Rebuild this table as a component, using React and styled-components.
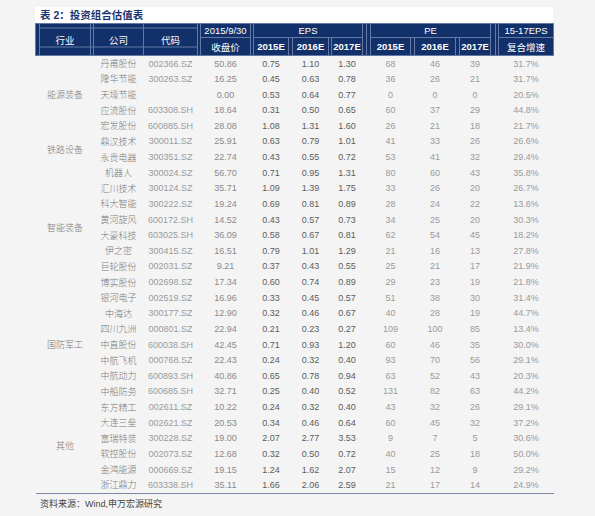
import React from "react"
import styled, { createGlobalStyle } from "styled-components"

const GlobalStyle = createGlobalStyle`
  html, body {
    margin: 0;
    padding: 0;
    background: #f4f4f4;
    font-family: "Liberation Sans", "Noto Sans CJK SC", sans-serif;
  }
`

const NAVY = "#12306a"
const LINE = "#6479a3"

// widths of every column, spacer columns included (sum = 518)
const COLS = [4, 51, 3, 50, 54, 3, 50, 3, 35, 4, 36, 3, 31, 4, 4, 40, 4, 41, 4, 31, 5, 3, 55]

const groups = [
    {name: "能源装备", rows: [
        ["丹甫股份", "002366.SZ", "50.86", "0.75", "1.10", "1.30", "68", "46", "39", "31.7%"],
        ["隆华节能", "300263.SZ", "16.25", "0.45", "0.63", "0.78", "36", "26", "21", "31.7%"],
        ["天壕节能", "", "0.00", "0.53", "0.64", "0.77", "0", "0", "0", "20.5%"],
        ["应流股份", "603308.SH", "18.64", "0.31", "0.50", "0.65", "60", "37", "29", "44.8%"],
        ["宏发股份", "600885.SH", "28.08", "1.08", "1.31", "1.60", "26", "21", "18", "21.7%"],
    ]},
    {name: "铁路设备", rows: [
        ["鼎汉技术", "300011.SZ", "25.91", "0.63", "0.79", "1.01", "41", "33", "26", "26.6%"],
        ["永贵电器", "300351.SZ", "22.74", "0.43", "0.55", "0.72", "53", "41", "32", "29.4%"],
    ]},
    {name: "智能装备", rows: [
        ["机器人", "300024.SZ", "56.70", "0.71", "0.95", "1.31", "80", "60", "43", "35.8%"],
        ["汇川技术", "300124.SZ", "35.71", "1.09", "1.39", "1.75", "33", "26", "20", "26.7%"],
        ["科大智能", "300222.SZ", "19.24", "0.69", "0.81", "0.89", "28", "24", "22", "13.6%"],
        ["黄河旋风", "600172.SH", "14.52", "0.43", "0.57", "0.73", "34", "25", "20", "30.3%"],
        ["大豪科技", "603025.SH", "36.09", "0.58", "0.67", "0.81", "62", "54", "45", "18.2%"],
        ["伊之密", "300415.SZ", "16.51", "0.79", "1.01", "1.29", "21", "16", "13", "27.8%"],
        ["巨轮股份", "002031.SZ", "9.21", "0.37", "0.43", "0.55", "25", "21", "17", "21.9%"],
        ["博实股份", "002698.SZ", "17.34", "0.60", "0.74", "0.89", "29", "23", "19", "21.8%"],
    ]},
    {name: "国防军工", rows: [
        ["银河电子", "002519.SZ", "16.96", "0.33", "0.45", "0.57", "51", "38", "30", "31.4%"],
        ["中海达", "300177.SZ", "12.90", "0.32", "0.46", "0.67", "40", "28", "19", "44.7%"],
        ["四川九洲", "000801.SZ", "22.94", "0.21", "0.23", "0.27", "109", "100", "85", "13.4%"],
        ["中直股份", "600038.SH", "42.45", "0.71", "0.93", "1.20", "60", "46", "35", "30.0%"],
        ["中航飞机", "000768.SZ", "22.43", "0.24", "0.32", "0.40", "93", "70", "56", "29.1%"],
        ["中航动力", "600893.SH", "40.86", "0.65", "0.78", "0.94", "63", "52", "43", "20.3%"],
        ["中船防务", "600685.SH", "32.71", "0.25", "0.40", "0.52", "131", "82", "63", "44.2%"],
    ]},
    {name: "其他", rows: [
        ["东方精工", "002611.SZ", "10.22", "0.24", "0.32", "0.40", "43", "32", "26", "29.1%"],
        ["大连三垒", "002621.SZ", "20.53", "0.34", "0.46", "0.64", "60", "45", "32", "37.2%"],
        ["富瑞特装", "300228.SZ", "19.00", "2.07", "2.77", "3.53", "9", "7", "5", "30.6%"],
        ["软控股份", "002073.SZ", "12.68", "0.32", "0.50", "0.72", "40", "25", "18", "50.0%"],
        ["金鸿能源", "000669.SZ", "19.15", "1.24", "1.62", "2.07", "15", "12", "9", "29.2%"],
        ["浙江鼎力", "603338.SH", "35.11", "1.66", "2.06", "2.59", "21", "17", "14", "24.9%"],
    ]},
]

const App = () => {
    return (
        <>
        <GlobalStyle />
        <Page>
            <TitleBar>表 2：投资组合估值表</TitleBar>
            <Table>
                <colgroup>
                    {COLS.map((w, i) => <Col key={i} $w={w} />)}
                </colgroup>
                <thead>
                    <TopRow>
                        <HeadCell rowSpan={2} />
                        <HeadCell rowSpan={2} $striped>行业</HeadCell>
                        <HeadCell rowSpan={2} $striped />
                        <HeadCell rowSpan={2} $striped>公司</HeadCell>
                        <HeadCell rowSpan={2} $striped>代码</HeadCell>
                        <HeadCell rowSpan={2} />
                        <HeadCell>2015/9/30</HeadCell>
                        <HeadCell rowSpan={2} />
                        <HeadCell colSpan={5}>EPS</HeadCell>
                        <HeadCell rowSpan={2} />
                        <HeadCell rowSpan={2} />
                        <HeadCell colSpan={5}>PE</HeadCell>
                        <HeadCell rowSpan={2} />
                        <HeadCell rowSpan={2} />
                        <HeadCell>15-17EPS</HeadCell>
                    </TopRow>
                    <SubRow>
                        <HeadCell>收盘价</HeadCell>
                        <HeadCell $bold>2015E</HeadCell>
                        <HeadCell />
                        <HeadCell $bold>2016E</HeadCell>
                        <HeadCell />
                        <HeadCell $bold>2017E</HeadCell>
                        <HeadCell $bold>2015E</HeadCell>
                        <HeadCell />
                        <HeadCell $bold>2016E</HeadCell>
                        <HeadCell />
                        <HeadCell $bold>2017E</HeadCell>
                        <HeadCell>复合增速</HeadCell>
                    </SubRow>
                </thead>
                <tbody>
                    {groups.map((g) => g.rows.map((r, i) => (
                        <BodyRow key={r[0]}>
                            <Cell />
                            {i === 0 && <Cell rowSpan={g.rows.length} $tone="#7a7a7a">{g.name}</Cell>}
                            <Cell />
                            <Cell $tone="#7a7a7a">{r[0]}</Cell>
                            <Cell $tone="#9a9a9a">{r[1]}</Cell>
                            <Cell />
                            <Cell $tone="#8a8a8a">{r[2]}</Cell>
                            <Cell />
                            <Cell $tone="#5c5c5c">{r[3]}</Cell>
                            <Cell />
                            <Cell $tone="#5c5c5c">{r[4]}</Cell>
                            <Cell />
                            <Cell $tone="#5c5c5c">{r[5]}</Cell>
                            <Cell />
                            <Cell />
                            <Cell $tone="#9a9a9a">{r[6]}</Cell>
                            <Cell />
                            <Cell $tone="#9a9a9a">{r[7]}</Cell>
                            <Cell />
                            <Cell $tone="#9a9a9a">{r[8]}</Cell>
                            <Cell />
                            <Cell />
                            <Cell $tone="#9a9a9a">{r[9]}</Cell>
                        </BodyRow>
                    )))}
                </tbody>
            </Table>
            <Source>资料来源：Wind,申万宏源研究</Source>
        </Page>
        </>
    )
}

export default App


const Page = styled.div`
padding: 7px 0 0 35px;
width: 518px;
`

const TitleBar = styled.div`
background: #fff;
height: 16px;
line-height: 16px;
padding-left: 5px;
font-size: 10.5px;
font-weight: bold;
color: #1d3370;
`

const Table = styled.table`
table-layout: fixed;
width: 518px;
border-collapse: collapse;
border-spacing: 0;
border-bottom: 1.5px solid #7b89a4;
`

const Col = styled.col`
width: ${p => p.$w}px;
`

const TopRow = styled.tr`
height: 14px;
`

const SubRow = styled.tr`
height: 18px;
`

const HeadCell = styled.th`
background: ${NAVY};
${p => p.$striped && `
background: linear-gradient(to bottom,
  ${NAVY} 0, ${NAVY} 3px, ${LINE} 3px, ${LINE} 4px, ${NAVY} 4px,
  ${NAVY} calc(100% - 9px), ${LINE} calc(100% - 9px), ${LINE} calc(100% - 8px), ${NAVY} calc(100% - 8px));
`}
border: 1px solid ${LINE};
color: #fff;
font-size: 9.5px;
font-weight: ${p => p.$bold ? "bold" : "normal"};
padding: 0;
text-align: center;
white-space: nowrap;
overflow: hidden;
`

const BodyRow = styled.tr`
height: 15.64px;
`

const Cell = styled.td`
padding: 0;
text-align: center;
font-size: 9px;
font-weight: 300;
color: ${p => p.$tone || "#777"};
white-space: nowrap;
overflow: visible;
`

const Source = styled.div`
padding: 3px 0 0 5px;
font-size: 9px;
color: #444;
`
